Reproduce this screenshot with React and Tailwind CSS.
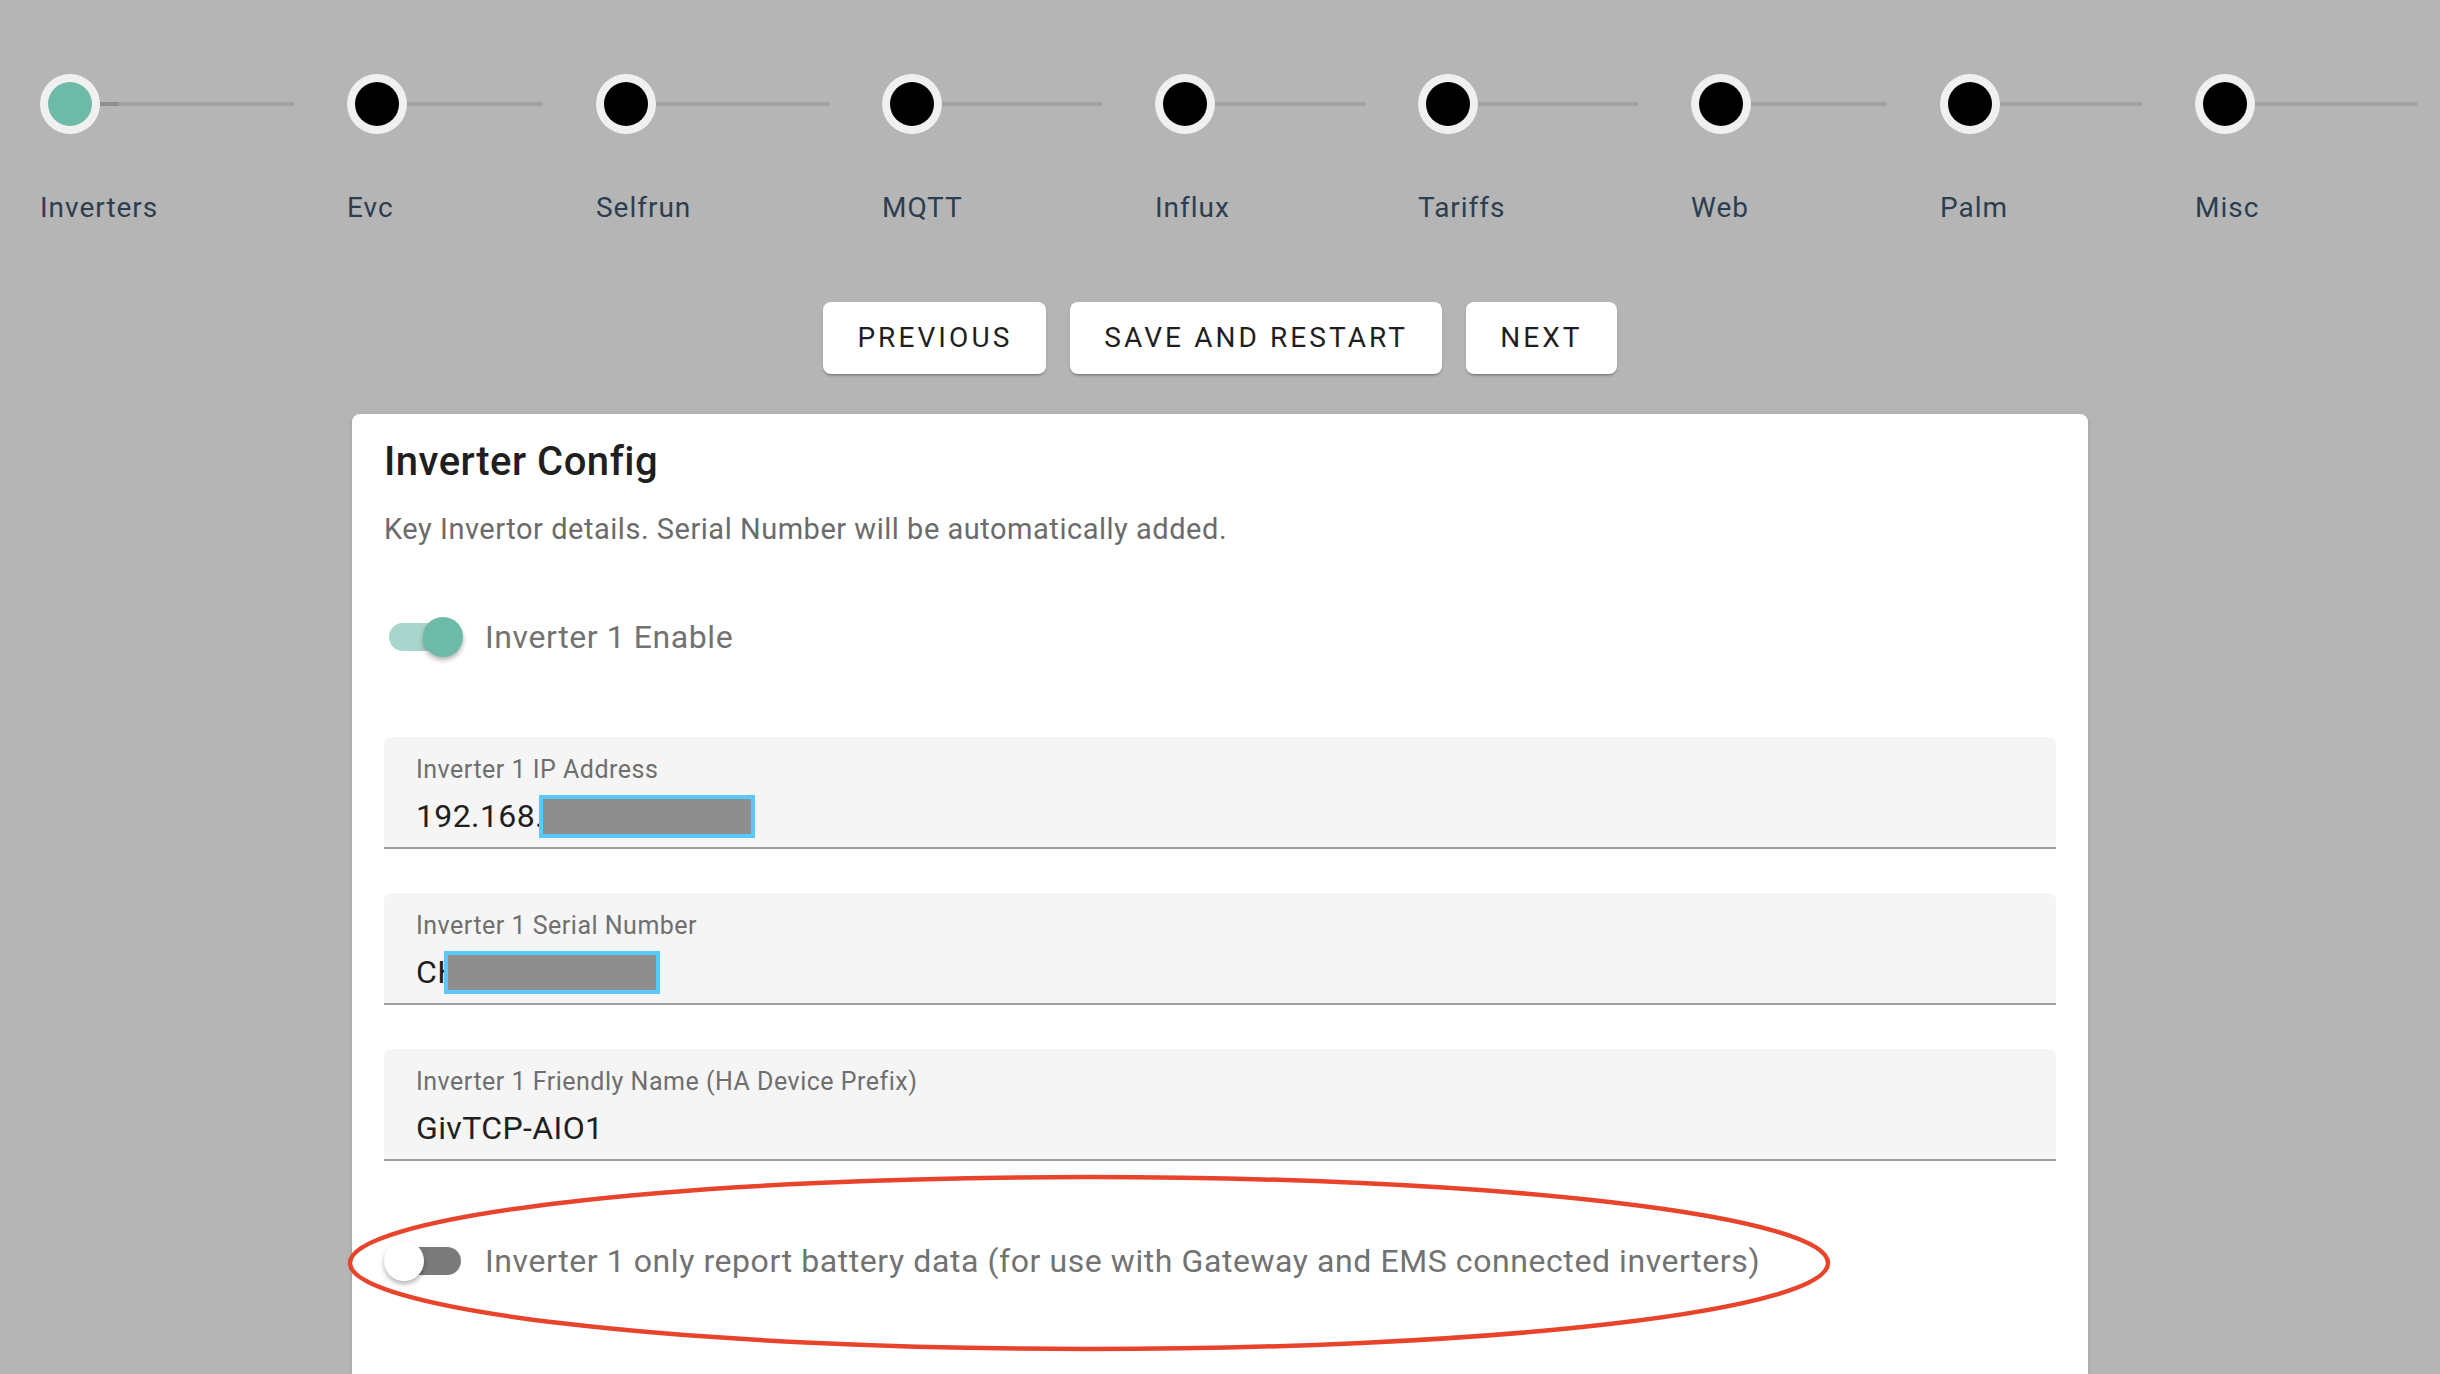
const STEPS = [
  { label: "Inverters", w: "w-[307px]", active: true },
  { label: "Evc", w: "w-[249px]" },
  { label: "Selfrun", w: "w-[286px]" },
  { label: "MQTT", w: "w-[273px]" },
  { label: "Influx", w: "w-[263px]" },
  { label: "Tariffs", w: "w-[273px]" },
  { label: "Web", w: "w-[249px]" },
  { label: "Palm", w: "w-[255px]" },
  { label: "Misc", w: "w-[222px]", last: true },
];

const Stepper = () => (
  <div className="flex pl-10 pt-[74px]">
    {STEPS.map((s) => (
      <div key={s.label} className={`${s.w} flex shrink-0 flex-col`}>
        <div className="flex items-center">
          <div className="flex size-[60px] shrink-0 items-center justify-center rounded-full bg-[#f0f0f0]">
            <div className={s.active ? "size-[44px] rounded-full bg-[#6dbaa9]" : "size-[44px] rounded-full bg-black"} />
          </div>
          <div className={s.last ? "h-1 flex-1 bg-[#a2a2a2]" : "mr-[53px] h-1 flex-1 bg-[#a2a2a2]"}>
            {s.active && <div className="h-full w-[19px] bg-[#8f8f8f]" />}
          </div>
        </div>
        <p className="mt-[54px] text-[28px] leading-[40px] tracking-[0.035em] text-[#2c3e50]">{s.label}</p>
      </div>
    ))}
  </div>
);

const Btn = ({ children }) => (
  <button className="h-[72px] rounded-lg bg-white px-[34px] text-[28px] uppercase tracking-[0.11em] text-[#1f1f1f] shadow-[0_3px_2px_-2px_rgba(0,0,0,0.25),0_2px_3px_rgba(0,0,0,0.14)]">
    {children}
  </button>
);

const Toggle = ({ on, label }) => (
  <div className="flex h-[80px] items-center">
    <div className="relative h-[40px] w-[80px] shrink-0">
      <div className={on ? "absolute left-[5px] top-[6px] h-[28px] w-[72px] rounded-full bg-[#a9d6cc]" : "absolute left-[5px] top-[6px] h-[28px] w-[72px] rounded-full bg-[#7a7a7a]"} />
      <div className={on ? "absolute left-[39px] top-0 size-[40px] rounded-full bg-[#6dbaa9] shadow-[0_3px_5px_rgba(0,0,0,0.3)]" : "absolute left-0 top-0 size-[40px] rounded-full bg-white shadow-[0_3px_5px_rgba(0,0,0,0.3)]"} />
    </div>
    <span className="ml-[21px] text-[32px] leading-[40px] tracking-[0.018em] text-[#727272]">{label}</span>
  </div>
);

// blue-framed grey block hiding part of a value
const Masked = ({ className }) => (
  <span className={`${className} inline-block h-[43px] w-[216px] border-4 border-[#5ac8fa] bg-[#8e8e8e]`} />
);

const Field = ({ label, children }) => (
  <div className="h-[112px] rounded-t-lg border-b-2 border-[#9e9e9e] bg-[#f5f5f5] px-8 pt-[21px]">
    <p className="text-[25px] leading-[24px] tracking-[0.02em] text-[#6f6f6f]">{label}</p>
    <div className="mt-[14px] flex h-[40px] items-center text-[32px] tracking-[0.012em] text-[#1f1f1f]">{children}</div>
  </div>
);

export default function App() {
  return (
    <div className="relative h-screen overflow-hidden bg-[#b5b5b5] font-['Roboto',sans-serif]">
      <Stepper />

      <div className="mt-[74px] flex justify-center gap-6">
        <Btn>Previous</Btn>
        <Btn>Save and restart</Btn>
        <Btn>Next</Btn>
      </div>

      <div className="mx-auto mt-10 w-[1736px] rounded-lg bg-white px-8 pb-40 pt-[24px] shadow-[0_2px_4px_rgba(0,0,0,0.15)]">
        <h2 className="text-[40px] font-medium leading-[48px] tracking-[0.0125em] text-[#1f1f1f]">Inverter Config</h2>
        <p className="mt-[23px] text-[29px] leading-[40px] tracking-[0.018em] text-[#6b6b6b]">
          Key Invertor details. Serial Number will be automatically added.
        </p>

        <div className="mt-[48px]">
          <Toggle on label="Inverter 1 Enable" />
        </div>

        <div className="mt-[60px] flex flex-col gap-[44px]">
          <Field label="Inverter 1 IP Address">
            <span>192.168.</span>
            <Masked className="-ml-[5px]" />
          </Field>
          <Field label="Inverter 1 Serial Number">
            <span>CH</span>
            <Masked className="-ml-[16px]" />
          </Field>
          <Field label="Inverter 1 Friendly Name (HA Device Prefix)">
            <span>GivTCP-AIO1</span>
          </Field>
        </div>

        <div className="mt-[60px]">
          <Toggle label="Inverter 1 only report battery data (for use with Gateway and EMS connected inverters)" />
        </div>
      </div>

      {/* red marker ring round the battery-only toggle */}
      <svg className="pointer-events-none absolute left-[346px] top-[1173px]" width="1486" height="180" viewBox="0 0 1486 180">
        <ellipse cx="743" cy="90" rx="739" ry="86" fill="none" stroke="#e8442b" strokeWidth="4.5" />
      </svg>
    </div>
  );
}
